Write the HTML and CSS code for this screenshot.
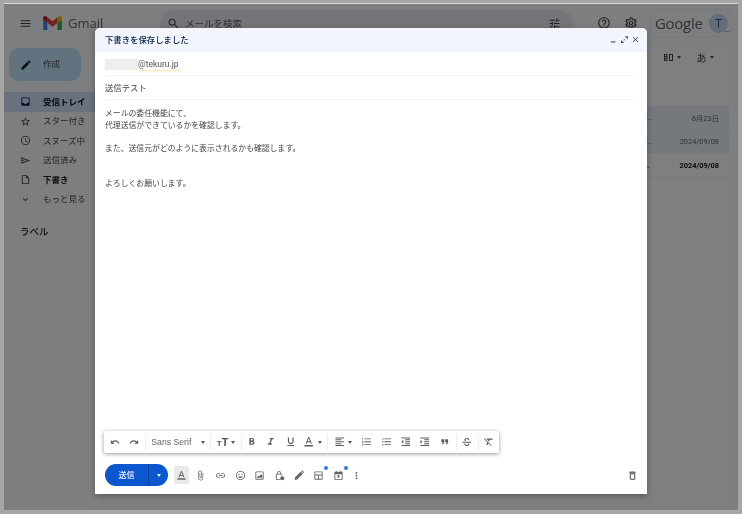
FILE: index.html
```html
<!DOCTYPE html>
<html lang="ja">
<head>
<meta charset="utf-8">
<title>Gmail</title>
<link rel="stylesheet" href="styles.css">
</head>
<body>
<div class="frame">
  <div class="app">
    <header class="topbar">
      <svg class="ic menu" viewBox="0 0 24 24"><path d="M3 18h18v-2H3v2zm0-5h18v-2H3v2zm0-7v2h18V6H3z"/></svg>
      <svg class="logo" viewBox="0 0 24 18"><path fill="#4285f4" d="M1.6 18h3.8V8.8L0 4.7v11.7C0 17.3.7 18 1.6 18z"/><path fill="#34a853" d="M18.5 18h3.8c.9 0 1.7-.7 1.7-1.6V4.7l-5.5 4.1z"/><path fill="#fbbc04" d="M18.5 1.7v7.1L24 4.7V2.5c0-2-2.3-3.2-4-2z"/><path fill="#ea4335" d="M5.4 8.8V1.7L12 6.6l6.5-4.9v7.1L12 13.7z"/><path fill="#c5221f" d="M0 2.5v2.2l5.4 4.1V1.7L4 .5C2.300-.7 0 .5 0 2.500z"/></svg>
      <span class="brand">Gmail</span>
      <div class="search">
        <svg class="ic" viewBox="0 0 24 24"><path d="M15.500 14h-.79l-.28-.27A6.470 6.470 0 0 0 16 9.500 6.500 6.500 0 1 0 9.500 16c1.610 0 3.090-.59 4.230-1.570l.27.28v.79l5 4.990L20.490 19l-4.990-5zm-6 0C7.010 14 5 11.990 5 9.500S7.010 5 9.500 5 14 7.010 14 9.500 11.990 14 9.500 14z"/></svg>
        <span class="search-text">メールを検索</span>
        <svg class="ic tune" viewBox="0 0 24 24"><path d="M3 17v2h6v-2H3zM3 5v2h10V5H3zm10 16v-2h8v-2h-8v-2h-2v6h2zM7 9v2H3v2h4v2h2V9H7zm14 4v-2H11v2h10zm-6-4h2V7h4V5h-4V3h-2v6z"/></svg>
      </div>
      <svg class="ic help" viewBox="0 0 24 24"><path d="M11 18h2v-2h-2v2zm1-16C6.480 2 2 6.480 2 12s4.480 10 10 10 10-4.480 10-10S17.520 2 12 2zm0 18c-4.410 0-8-3.590-8-8s3.590-8 8-8 8 3.590 8 8-3.590 8-8 8zm0-14c-2.210 0-4 1.790-4 4h2c0-1.100.9-2 2-2s2 .9 2 2c0 2-3 1.750-3 5h2c0-2.250 3-2.500 3-5 0-2.210-1.790-4-4-4z"/></svg>
      <svg class="ic gear" viewBox="0 0 24 24"><path d="M19.430 12.980c.04-.32.07-.64.07-.98 0-.34-.03-.66-.07-.98l2.110-1.650c.19-.15.24-.42.12-.64l-2-3.460c-.09-.16-.26-.25-.44-.25-.06 0-.12.01-.17.03l-2.490 1c-.52-.4-1.080-.73-1.690-.98l-.38-2.650C14.460 2.180 14.250 2 14 2h-4c-.25 0-.46.18-.49.42l-.38 2.650c-.61.25-1.170.59-1.690.98l-2.490-1c-.06-.02-.12-.03-.18-.03-.17 0-.34.09-.43.25l-2 3.460c-.13.22-.07.49.12.64l2.110 1.650c-.04.32-.07.65-.07.98 0 .33.03.66.07.98l-2.110 1.650c-.19.15-.24.42-.12.64l2 3.460c.09.16.26.25.44.25.06 0 .12-.01.17-.03l2.490-1c.52.4 1.080.73 1.690.98l.38 2.650c.03.24.24.42.49.42h4c.25 0 .46-.18.49-.42l.38-2.650c.61-.25 1.170-.59 1.690-.98l2.490 1c.06.02.12.03.18.03.17 0 .34-.09.43-.25l2-3.460c.12-.22.07-.49-.12-.64l-2.110-1.650zm-1.980-1.710c.04.31.05.52.05.73 0 .21-.02.43-.05.73l-.14 1.130.89.7 1.080.84-.7 1.210-1.270-.51-1.040-.42-.9.68c-.43.32-.84.56-1.250.73l-1.060.43-.16 1.130-.2 1.350h-1.400l-.19-1.350-.16-1.130-1.060-.43c-.43-.18-.83-.41-1.230-.71l-.91-.7-1.060.43-1.270.51-.7-1.210 1.080-.84.89-.7-.14-1.130c-.03-.31-.05-.54-.05-.74s.02-.43.05-.73l.14-1.130-.89-.7-1.080-.84.7-1.210 1.270.51 1.040.42.9-.68c.43-.32.84-.56 1.250-.73l1.060-.43.16-1.130.2-1.350h1.390l.19 1.350.16 1.130 1.060.43c.43.18.83.41 1.230.71l.91.7 1.060-.43 1.270-.51.7 1.210-1.070.85-.89.7.14 1.130zM12 8c-2.210 0-4 1.790-4 4s1.790 4 4 4 4-1.790 4-4-1.790-4-4-4zm0 6c-1.100 0-2-.9-2-2s.9-2 2-2 2 .9 2 2-.9 2-2 2z"/></svg>
      <div class="account">
        <span class="google">Google</span>
        <span class="avatar">T<i class="dots">…</i></span>
      </div>
    </header>
    <div class="content">
      <nav class="sidebar">
        <div class="compose">
          <svg class="ic pencil" viewBox="0 0 24 24"><path d="M3 17.250V21h3.750L17.810 9.940l-3.750-3.750L3 17.250zM20.710 7.040a1 1 0 0 0 0-1.410l-2.340-2.340a1 1 0 0 0-1.410 0l-1.830 1.830 3.750 3.750 1.830-1.830z"/></svg>
          <span>作成</span>
        </div>
        <div class="nav-item active">
          <svg class="ic" viewBox="0 0 24 24"><path d="M19 3H5a2 2 0 0 0-2 2v14a2 2 0 0 0 2 2h14a2 2 0 0 0 2-2V5a2 2 0 0 0-2-2zm0 12h-4a3 3 0 0 1-6 0H5V5h14v10z"/></svg>
          <span>受信トレイ</span>
        </div>
        <div class="nav-item">
          <svg class="ic" viewBox="0 0 24 24"><path d="M22 9.240l-7.190-.62L12 2 9.190 8.630 2 9.240l5.460 4.730L5.820 21 12 17.270 18.180 21l-1.630-7.030L22 9.240zM12 15.400l-3.760 2.270 1-4.280-3.320-2.880 4.380-.38L12 6.100l1.710 4.040 4.380.38-3.320 2.880 1 4.280L12 15.400z"/></svg>
          <span>スター付き</span>
        </div>
        <div class="nav-item">
          <svg class="ic" viewBox="0 0 24 24"><path d="M12 2a10 10 0 1 0 0 20 10 10 0 0 0 0-20zm0 18a8 8 0 1 1 0-16 8 8 0 0 1 0 16zm.5-13H11v6l5.250 3.150.75-1.230-4.500-2.670V7z"/></svg>
          <span>スヌーズ中</span>
        </div>
        <div class="nav-item">
          <svg class="ic" viewBox="0 0 24 24"><path d="M3 5v14l19-7L3 5zm2 3l11 4-11 4v-3l5-1-5-1V8z"/></svg>
          <span>送信済み</span>
        </div>
        <div class="nav-item strong">
          <svg class="ic" viewBox="0 0 24 24"><path d="M14 2H6a2 2 0 0 0-2 2v16a2 2 0 0 0 2 2h12a2 2 0 0 0 2-2V8l-6-6zm4 18H6V4h7v5h5v11z"/></svg>
          <span>下書き</span>
        </div>
        <div class="nav-item">
          <svg class="ic" viewBox="0 0 24 24"><path d="M7.400 8.600 12 13.200l4.600-4.600L18 10l-6 6-6-6z"/></svg>
          <span>もっと見る</span>
        </div>
        <div class="labels">ラベル</div>
      </nav>
      <main class="list">
        <div class="list-tools">
          <svg class="density" viewBox="0 0 9 7"><path d="M0 0h3.500v7H0zM1 1v1h1.500V1zm0 2v1h1.500V3zm0 2v1h1.500V5zM5 0h4v7H5zm1 1v5h2V1z" fill-rule="evenodd"/></svg>
          <b class="caret"></b>
          <span class="lang">あ</span>
          <b class="caret"></b>
        </div>
        <div class="row unread-bg"><span class="snippet">…</span><span class="date">6月23日</span></div>
        <div class="row unread-bg"><span class="snippet">…</span><span class="date">2024/09/08</span></div>
        <div class="row bold"><span class="snippet">.</span><span class="date">2024/09/08</span></div>
      </main>
    </div>
    <div class="overlay"></div>

    <section class="composer">
      <div class="c-head">
        <span class="c-title">下書きを保存しました</span>
        <div class="c-actions">
          <svg class="ic9" viewBox="0 0 24 24"><path d="M5 17h12v3H5z"/></svg>
          <svg class="ic9" viewBox="0 0 24 24"><path d="M3 21v-8l8 8zM21 3v8l-8-8zM10 11h3v3h-3z"/></svg>
          <svg class="ic9" viewBox="0 0 24 24"><path d="M19 6.410 17.590 5 12 10.590 6.410 5 5 6.410 10.590 12 5 17.590 6.410 19 12 13.410 17.590 19 19 17.590 13.410 12z"/></svg>
        </div>
      </div>
      <div class="c-to"><span class="mask"></span><span class="addr">@tekuru.jp</span></div>
      <div class="c-subject">送信テスト</div>
      <div class="c-body">
        <p>メールの委任機能にて、</p>
        <p>代理送信ができているかを確認します。</p>
        <p class="gap1">また、送信元がどのように表示されるかも確認します。</p>
        <p class="gap2">よろしくお願いします。</p>
      </div>

      <div class="format">
        <button class="t small"><svg viewBox="0 0 24 24"><path d="M12.500 8c-2.650 0-5.050.99-6.900 2.600L2 7v9h9l-3.620-3.620c1.390-1.160 3.160-1.880 5.120-1.880 3.540 0 6.550 2.310 7.600 5.500l2.370-.78C21.080 11.030 17.150 8 12.500 8z"/></svg></button>
        <button class="t small"><svg viewBox="0 0 24 24"><path d="M18.400 10.600C16.550 8.990 14.150 8 11.500 8c-4.650 0-8.580 3.030-9.960 7.220L3.900 16c1.050-3.190 4.050-5.500 7.600-5.500 1.950 0 3.730.72 5.120 1.880L13 16h9V7l-3.600 3.600z"/></svg></button>
        <i class="sep"></i>
        <span class="font-name">Sans Serif</span><b class="caret wide"></b>
        <i class="sep"></i>
        <span class="tt"><small>T</small>T</span><b class="caret after-tt"></b>
        <i class="sep"></i>
        <button class="t"><svg viewBox="0 0 24 24"><path d="M15.600 10.790c.97-.67 1.650-1.770 1.650-2.790 0-2.260-1.750-4-4-4H7v14h7.040c2.090 0 3.710-1.700 3.710-3.790 0-1.520-.86-2.820-2.150-3.420zM10 6.500h3c.83 0 1.500.67 1.500 1.500s-.67 1.500-1.500 1.500h-3v-3zm3.500 9H10v-3h3.500c.83 0 1.500.67 1.500 1.500s-.67 1.500-1.500 1.500z"/></svg></button>
        <button class="t"><svg viewBox="0 0 24 24"><path d="M10 4v3h2.210l-3.420 8H6v3h8v-3h-2.210l3.420-8H18V4z"/></svg></button>
        <button class="t"><svg viewBox="0 0 24 24"><path d="M12 17c3.310 0 6-2.690 6-6V3h-2.500v8c0 1.930-1.570 3.500-3.500 3.500S8.500 12.930 8.500 11V3H6v8c0 3.310 2.690 6 6 6zm-7 2v2h14v-2H5z"/></svg></button>
        <button class="t narrow"><svg viewBox="0 0 24 24"><path d="M11 2 5.500 16h2.250l1.120-3h6.250l1.120 3h2.250L13 2h-2zm-1.380 9L12 4.670 14.380 11H9.620zM3 19h18v3H3z"/></svg></button><b class="caret"></b>
        <i class="sep"></i>
        <button class="t narrow after-sep"><svg viewBox="0 0 24 24"><path d="M15 15H3v2h12v-2zm0-8H3v2h12V7zM3 13h18v-2H3v2zm0 8h18v-2H3v2zM3 3v2h18V3H3z"/></svg></button><b class="caret"></b>
        <button class="t"><svg viewBox="0 0 24 24"><path d="M2 17h2v.5H3v1h1v.5H2v1h3v-4H2v1zm1-9h1V4H2v1h1v3zm-1 3h1.800L2 13.100v.9h3v-1H3.200L5 10.900V10H2v1zm5-6v2h14V5H7zm0 14h14v-2H7v2zm0-6h14v-2H7v2z"/></svg></button>
        <button class="t"><svg viewBox="0 0 24 24"><path d="M4 10.500a1.500 1.500 0 1 0 0 3 1.500 1.500 0 0 0 0-3zm0-6a1.500 1.500 0 1 0 0 3 1.500 1.500 0 0 0 0-3zm0 12a1.500 1.500 0 1 0 0 3 1.500 1.500 0 0 0 0-3zM7 19h14v-2H7v2zm0-6h14v-2H7v2zm0-8v2h14V5H7z"/></svg></button>
        <button class="t"><svg viewBox="0 0 24 24"><path d="M11 17h10v-2H11v2zm-8-5 4 4V8l-4 4zm0 9h18v-2H3v2zM3 3v2h18V3H3zm8 6h10V7H11v2zm0 4h10v-2H11v2z"/></svg></button>
        <button class="t"><svg viewBox="0 0 24 24"><path d="M3 21h18v-2H3v2zM3 8v8l4-4-4-4zm8 9h10v-2H11v2zM3 3v2h18V3H3zm8 6h10V7H11v2zm0 4h10v-2H11v2z"/></svg></button>
        <button class="t"><svg viewBox="0 0 24 24"><path d="M6 17h3l2-4V7H5v6h3zm8 0h3l2-4V7h-6v6h3z"/></svg></button>
        <i class="sep"></i>
        <button class="t"><svg viewBox="0 0 24 24"><path d="M12 4c-3 0-5 1.500-5 4 0 1 .3 1.800.9 2.500h3.300C9.800 10 9.500 9 9.500 8.200c0-1.200 1-2 2.500-2s2.400.9 2.600 2.100h2.500C16.800 5.700 14.900 4 12 4zM3 12v2h18v-2zm11.300 3.500c.3.400.4.800.4 1.200 0 1.200-1.100 1.900-2.700 1.900-1.700 0-2.800-.9-3-2.300H6.500c.2 2.800 2.400 4.400 5.500 4.400 3.100 0 5.200-1.600 5.200-4 0-.5-.1-.9-.2-1.200z"/></svg></button>
        <i class="sep"></i>
        <button class="t"><svg viewBox="0 0 24 24"><path d="M3.270 5 2 6.270l6.970 6.970L6.500 19h3l1.570-3.660L16.730 21 18 19.730 3.550 5.270 3.270 5zM6 5v.18L8.820 8h2.400l-.72 1.680 2.100 2.100L14.210 8H20V5H6z"/></svg></button>
      </div>

      <div class="c-foot">
        <div class="send"><span class="send-label">送信</span><span class="send-more"><b class="caret white"></b></span></div>
        <div class="tools">
          <button class="f selected"><svg viewBox="0 0 24 24"><path d="M11 2 5.500 16h2.250l1.120-3h6.250l1.120 3h2.250L13 2h-2zm-1.380 9L12 4.670 14.380 11H9.620zM3 18h18v3H3z"/></svg></button>
          <button class="f"><svg viewBox="0 0 24 24"><path d="M16.500 6v11.500c0 2.210-1.790 4-4 4s-4-1.790-4-4V5c0-1.380 1.120-2.500 2.500-2.500s2.500 1.120 2.500 2.500v10.500c0 .55-.45 1-1 1s-1-.45-1-1V6H10v9.500c0 1.380 1.120 2.500 2.500 2.500s2.500-1.120 2.500-2.500V5c0-2.210-1.790-4-4-4S7 2.790 7 5v12.500c0 3.040 2.460 5.500 5.500 5.500s5.500-2.460 5.500-5.500V6h-1.500z"/></svg></button>
          <button class="f"><svg viewBox="0 0 24 24"><path d="M3.900 12c0-1.710 1.390-3.100 3.100-3.100h4V7H7c-2.760 0-5 2.240-5 5s2.240 5 5 5h4v-1.900H7c-1.710 0-3.100-1.390-3.100-3.100zM8 13h8v-2H8v2zm9-6h-4v1.900h4c1.710 0 3.100 1.390 3.100 3.100s-1.390 3.100-3.100 3.100h-4V17h4c2.760 0 5-2.240 5-5s-2.240-5-5-5z"/></svg></button>
          <button class="f"><svg viewBox="0 0 24 24"><path d="M12 2a10 10 0 1 0 0 20 10 10 0 0 0 0-20zm0 18a8 8 0 1 1 0-16 8 8 0 0 1 0 16zM8.500 11a1.500 1.500 0 1 0 0-3 1.500 1.500 0 0 0 0 3zm7 0a1.500 1.500 0 1 0 0-3 1.500 1.500 0 0 0 0 3zM12 17.500c2.300 0 4.300-1.400 5.100-3.500H6.900c.8 2.100 2.800 3.500 5.100 3.500z"/></svg></button>
          <button class="f"><svg viewBox="0 0 24 24"><path d="M19 3H5a2 2 0 0 0-2 2v14a2 2 0 0 0 2 2h14a2 2 0 0 0 2-2V5a2 2 0 0 0-2-2zm0 16H5V5h14v14zM6 17h12v-5l-3-3-4 5-2-2z"/></svg></button>
          <button class="f"><svg viewBox="0 0 24 24"><path d="M16 8h-1V6a4 4 0 0 0-8 0v2H6a2 2 0 0 0-2 2v10a2 2 0 0 0 2 2h8v-2H6V10h10v2h2v-2a2 2 0 0 0-2-2zM9 6a2 2 0 0 1 4 0v2H9V6z"/><circle cx="18" cy="18" r="4.500"/></svg></button>
          <button class="f pen"><svg viewBox="0 0 24 24"><path d="M3 21l1-5L15 5l4 4L8 20zM16.500 3.500a1.500 1.500 0 0 1 2.100 0l1.900 1.900a1.500 1.500 0 0 1 0 2.100L20 8l-4-4z"/></svg></button>
          <button class="f dot"><svg viewBox="0 0 24 24"><path d="M19 3H5a2 2 0 0 0-2 2v14a2 2 0 0 0 2 2h14a2 2 0 0 0 2-2V5a2 2 0 0 0-2-2zm0 2v5H5V5h14zM5 19v-7h6v7H5zm8 0v-7h6v7h-6z"/></svg></button>
          <button class="f dot"><svg viewBox="0 0 24 24"><path d="M19 4h-1V2h-2v2H8V2H6v2H5a2 2 0 0 0-2 2v14a2 2 0 0 0 2 2h14a2 2 0 0 0 2-2V6a2 2 0 0 0-2-2zm0 16H5V9h14v11zm-9-9h4v4l-2 2h-2z"/></svg></button>
          <button class="f more"><svg viewBox="0 0 24 24"><path d="M12 8a2 2 0 1 0 0-4 2 2 0 0 0 0 4zm0 2a2 2 0 1 0 0 4 2 2 0 0 0 0-4zm0 6a2 2 0 1 0 0 4 2 2 0 0 0 0-4z"/></svg></button>
        </div>
        <button class="f trash"><svg viewBox="0 0 24 24"><path d="M6 19c0 1.100.9 2 2 2h8c1.100 0 2-.9 2-2V7H6v12zM8 9h8v10H8V9zm7.500-5-1-1h-5l-1 1H5v2h14V4h-3.500z"/></svg></button>
      </div>
    </section>
  </div>
</div>
</body>
</html>
```

FILE: styles.css
```css
* { box-sizing: border-box; }
html, body { margin: 0; height: 100%; overflow: hidden; }
body {
  background: #a6a6a6;
  font-family: "Noto Sans CJK JP", "Noto Sans", sans-serif;
  color: #444746;
}
.frame {
  width: 742px;
  height: 514px;
  padding: 4px;
  filter: blur(.5px);
  background: #a6a6a6;
}
.app {
  position: relative;
  width: 734px;
  height: 506px;
  background: #fbfcfe;
  overflow: hidden;
  box-shadow: 0 -1px 0 #d8d8d8;
}
.overlay {
  position: absolute;
  inset: 0;
  background: rgba(0, 0, 0, .5);
}

/* Gmail behind */
.ic { width: 12px; height: 12px; fill: #444746; flex: none; display: block; }
.topbar {
  display: flex;
  align-items: center;
  height: 38px;
  padding: 0 0 0 15px;
}
.menu { width: 13px; height: 13px; }
.logo { width: 19px; height: 14px; margin-left: 11px; flex: none; }
.brand { margin-left: 6px; font: 13px "Open Sans", sans-serif; color: #5f6368; width: 38px; }
.search {
  display: flex;
  align-items: center;
  width: 413px;
  height: 27px;
  margin-left: 54px;
  padding: 0 12px 0 7px;
  border-radius: 14px;
  background: #e6ebf0;
}
.search .ic { width: 13px; height: 13px; }
.search-text { margin-left: 5px; font-size: 9.500px; color: #5f6368; flex: 1; }
.help { width: 14px; height: 14px; margin-left: 24px; }
.gear { width: 14px; height: 14px; margin-left: 13px; }
.account {
  display: flex;
  align-items: center;
  width: 81px;
  height: 28px;
  margin-left: 12px;
  padding: 0 2px 0 4px;
  border-radius: 6px;
  border: 1px solid #eef0f3;
}
.google { font: 15px "Open Sans", sans-serif; color: #5f6368; letter-spacing: -.3px; flex: 1; }
.avatar {
  position: relative;
  width: 19px;
  height: 19px;
  border-radius: 50%;
  background: #c8d8f0;
  color: #1a56b0;
  font: 12px/19px "Open Sans", sans-serif;
  text-align: center;
}
.dots { position: absolute; right: -2px; bottom: 0; font: 7px/7px "Open Sans", sans-serif; color: #444; }
.content { display: flex; height: 468px; }
.sidebar { width: 91px; flex: none; }
.compose {
  display: flex;
  align-items: center;
  width: 72px;
  height: 33px;
  margin: 6px 0 11px 5px;
  padding-left: 11px;
  border-radius: 10px;
  background: #c2e7ff;
  font-size: 8.500px;
  gap: 11px;
}
.compose span { padding-bottom: 4px; }
.compose .ic { fill: #111; }
.nav-item {
  display: flex;
  align-items: center;
  gap: 12px;
  height: 19.500px;
  padding-left: 16px;
  font-size: 8.500px;
  white-space: nowrap;
}
.nav-item span { padding-bottom: 2px; }
.nav-item .ic { width: 11px; height: 11px; }
.active { background: #d3e3fd; font-weight: 700; color: #0b0f14; }
.active .ic { fill: #041e49; }
.strong { font-weight: 700; color: #1f1f1f; }
.labels { margin: 15px 0 0 16px; font-size: 9.500px; font-weight: 500; color: #1f1f1f; }
.list {
  flex: 1;
  margin: 0 9px 0 0;
  background: #fff;
  border-radius: 12px 12px 0 0;
  height: 468px;
}
.list-tools {
  display: flex;
  justify-content: flex-end;
  align-items: center;
  height: 30px;
  margin-bottom: 34px;
  padding-right: 15px;
  color: #444;
}
.density { width: 9px; height: 7px; fill: #444746; flex: none; margin-right: 4.500px; }
.lang { font-size: 10px; margin-left: 15.500px; margin-right: 3.500px; }
.list-tools .caret { margin: 0; }
.row {
  display: flex;
  justify-content: space-between;
  align-items: center;
  height: 24px;
  padding: 0 10px 0 552px;
  font-size: 7.400px;
  color: #5f6368;
  border-bottom: 1px solid #f0f2f4;
  font-family: Roboto, "Noto Sans CJK JP", sans-serif;
}
.unread-bg { background: #eaf0f8; }
.bold { font-weight: 700; color: #111; }

/* Composer */
.composer {
  position: absolute;
  left: 91px;
  top: 24px;
  width: 552px;
  height: 466px;
  display: flex;
  flex-direction: column;
  background: #fff;
  border-radius: 5px 5px 0 0;
  box-shadow: 0 2px 6px rgba(0, 0, 0, .3);
}
.c-head {
  display: flex;
  align-items: center;
  justify-content: space-between;
  height: 24px;
  flex: none;
  padding: 0 7px 0 10px;
  background: #f2f6fc;
  border-radius: 5px 5px 0 0;
}
.c-title { font-size: 8.400px; font-weight: 500; color: #041e49; padding-bottom: 2px; }
.c-actions { display: flex; gap: 2px; padding-bottom: 1px; }
.ic9 { width: 9px; height: 9px; fill: #444746; display: block; }
.c-to {
  display: flex;
  align-items: center;
  margin: 0 10px;
  height: 24px;
  flex: none;
  padding-top: 2px;
  border-bottom: 1px solid #f4f4f4;
}
.mask { width: 33px; height: 11px; background: #eeeeee; }
.addr {
  font: 8.500px/11px Roboto, "Liberation Sans", sans-serif;
  color: #555;
  border-bottom: 1px solid #f8e7b5;
}
.c-subject {
  margin: 0 10px;
  height: 24px;
  flex: none;
  font-size: 8.400px;
  line-height: 23px;
  color: #444;
  border-bottom: 1px solid #f4f4f4;
}
.c-body {
  flex: 1;
  padding: 7px 10px 0;
  font-size: 7.850px;
  line-height: 11.700px;
  color: #444;
}
.c-body p { margin: 0; white-space: nowrap; }
.c-body .gap1 { margin-top: 11.700px; }
.c-body .gap2 { margin-top: 23.400px; }

.format {
  position: absolute;
  left: 9px;
  top: 403px;
  width: 395px;
  height: 22px;
  display: flex;
  align-items: center;
  padding-left: 1px;
  background: #fff;
  border-radius: 2px;
  box-shadow: 0 1px 4px rgba(0, 0, 0, .4);
}
button { border: 0; padding: 0; background: none; display: flex; align-items: center; justify-content: center; }
.t { width: 19.400px; height: 22px; flex: none; }
.t.narrow { width: 14px; margin-left: 2px; }
.t.after-sep { margin-left: 4.500px; }
.t svg { width: 11.500px; height: 11.500px; fill: #5a5d60; }
.t.small svg { width: 10px; height: 10px; }
.sep { width: 1px; height: 16px; background: #eee; flex: none; margin-left: 1.500px; }
.font-name {
  font: 8.700px "Liberation Sans", sans-serif;
  color: #666;
  width: 41px;
  margin-left: 5px;
  flex: none;
  white-space: nowrap;
}
.caret {
  width: 0;
  height: 0;
  border: 2.500px solid transparent;
  border-top: 3px solid #555;
  border-bottom: 0;
  flex: none;
  margin: 0 3.500px 0 2px;
}
.t.narrow + .caret { margin-left: 2.200px; }
.t.after-sep + .caret { margin-left: 1.200px; margin-right: 5.500px; }
.caret.after-tt { margin-right: 4.500px; margin-left: 1px; }
.caret.wide { margin: 0 3.500px 0 8.500px; }
.caret.white { border-top-color: #fff; margin: 0; }
.tt { font: 700 11px "Liberation Sans", sans-serif; color: #555; margin-left: 6px; width: 13px; flex: none; white-space: nowrap; }
.tt small { font-size: 8px; }

.c-foot {
  position: absolute;
  left: 10px;
  right: 10px;
  top: 436px;
  height: 22px;
  display: flex;
  align-items: center;
}
.send {
  display: flex;
  width: 63px;
  height: 22px;
  border-radius: 11px;
  background: #0b57d0;
  color: #fff;
  font-size: 8px;
  font-weight: 500;
  line-height: 21px;
  flex: none;
}
.send-label { width: 43px; text-align: center; }
.send-more {
  flex: 1;
  display: flex;
  align-items: center;
  justify-content: center;
  border-left: 1px solid #0a3f96;
}
.tools { display: flex; align-items: center; margin-left: 3.500px; flex: 1; }
.f { position: relative; width: 19.600px; height: 22px; flex: none; }
.f svg { width: 11px; height: 11px; fill: #666; }
.f.pen svg { width: 12.500px; height: 12.500px; }
.f.more { margin-left: -1px; }
.selected::before {
  content: "";
  position: absolute;
  left: 2px;
  top: 2px;
  width: 15px;
  height: 18px;
  background: #e9e9e9;
  border-radius: 2px;
}
.selected svg { position: relative; }
.dot::after {
  content: "";
  position: absolute;
  right: 0;
  top: 2px;
  width: 4px;
  height: 4px;
  border-radius: 50%;
  background: #2b7de9;
}
.trash { margin-right: -5px; }
.trash svg { fill: #444; }
```
